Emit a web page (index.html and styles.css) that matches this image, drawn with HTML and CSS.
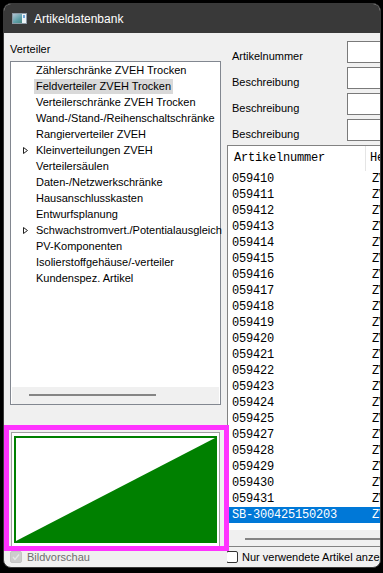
FILE: index.html
```html
<!DOCTYPE html>
<html lang="de">
<head>
  <meta charset="UTF-8">
  <title>Artikeldatenbank</title>
  <link rel="stylesheet" href="styles.css">
</head>
<body>

  <div class="window">
    <div class="titlebar">
      <svg class="app-icon" width="15" height="11" viewBox="0 0 15 11">
        <defs>
          <linearGradient id="ig" x1="0" y1="0" x2="1" y2="1">
            <stop offset="0" stop-color="#b9c8d6"/>
            <stop offset="0.5" stop-color="#5f9fa8"/>
            <stop offset="1" stop-color="#3b7d6b"/>
          </linearGradient>
        </defs>
        <rect x="0.5" y="0.5" width="14" height="10" fill="url(#ig)" stroke="#8d9aa6"/>
        <rect x="10" y="1" width="4" height="9" fill="#eef4f8"/>
        <rect x="11" y="2" width="2" height="3" fill="#6fa4d8"/>
      </svg>
      <span>Artikeldatenbank</span>
    </div>

    <div class="client">
      <div class="left">
        <div class="caption">Verteiler</div>
        <div class="tree">
          <ul class="tree-items">
            <li><span class="expander"></span><span class="node">Zählerschränke ZVEH Trocken</span></li>
            <li><span class="expander"></span><span class="node selected">Feldverteiler ZVEH Trocken</span></li>
            <li><span class="expander"></span><span class="node">Verteilerschränke ZVEH Trocken</span></li>
            <li><span class="expander"></span><span class="node">Wand-/Stand-/Reihenschaltschränke</span></li>
            <li><span class="expander"></span><span class="node">Rangierverteiler ZVEH</span></li>
            <li>
              <span class="expander">
                <svg width="5" height="7" viewBox="0 0 5 7"><polygon points="0.5,0.5 4.5,3.5 0.5,6.5" fill="none" stroke="#222"/></svg>
              </span>
              <span class="node">Kleinverteilungen ZVEH</span>
            </li>
            <li><span class="expander"></span><span class="node">Verteilersäulen</span></li>
            <li><span class="expander"></span><span class="node">Daten-/Netzwerkschränke</span></li>
            <li><span class="expander"></span><span class="node">Hausanschlusskasten</span></li>
            <li><span class="expander"></span><span class="node">Entwurfsplanung</span></li>
            <li>
              <span class="expander">
                <svg width="5" height="7" viewBox="0 0 5 7"><polygon points="0.5,0.5 4.5,3.5 0.5,6.5" fill="none" stroke="#222"/></svg>
              </span>
              <span class="node">Schwachstromvert./Potentialausgleich</span>
            </li>
            <li><span class="expander"></span><span class="node">PV-Komponenten</span></li>
            <li><span class="expander"></span><span class="node">Isolierstoffgehäuse/-verteiler</span></li>
            <li><span class="expander"></span><span class="node">Kundenspez. Artikel</span></li>
          </ul>
          <div class="hscroll"><div class="thumb"></div></div>
        </div>

        <div class="preview">
          <svg width="203" height="107" viewBox="0 0 203 107">
            <rect x="1" y="1" width="201" height="105" fill="#fff" stroke="#008000" stroke-width="2"/>
            <polygon points="2,105 201,105 201,2" fill="#008000"/>
          </svg>
        </div>

        <div class="check disabled">
          <span class="box">
            <svg width="10" height="10" viewBox="0 0 10 10"><polyline points="2,5 4,7.5 8,2.5" fill="none" stroke="#e6e6e6" stroke-width="1.3"/></svg>
          </span>
          Bildvorschau
        </div>
      </div>

      <div class="right">
        <div class="field"><label>Artikelnummer</label><div class="input"></div></div>
        <div class="field"><label>Beschreibung</label><div class="input"></div></div>
        <div class="field"><label>Beschreibung</label><div class="input"></div></div>
        <div class="field"><label>Beschreibung</label><div class="input"></div></div>

        <div class="grid">
          <div class="grid-head">
            <div class="col1">Artikelnummer</div>
            <div class="col2">Hersteller</div>
          </div>
          <div class="grid-rows" id="rows"></div>
          <div class="grid-spacer"></div>
          <div class="grid-scroll"><div class="thumb"></div></div>
        </div>

        <div class="check used">
          <span class="box"></span>
          Nur verwendete Artikel anzeigen
        </div>
      </div>

      <div class="marker"></div>
    </div>
  </div>

  <script>
    const rows = document.getElementById("rows");
    const numbers = [];
    for (let n = 59410; n <= 59431; n++) {
      if (n !== 59426) numbers.push("0" + n);
    }
    numbers.push("SB-300425150203");

    numbers.forEach((nr, i) => {
      const row = document.createElement("div");
      row.className = "row" + (i === numbers.length - 1 ? " selected" : "");
      row.innerHTML = `<div class="col1">${nr}</div><div class="col2">ZVEH</div>`;
      rows.appendChild(row);
    });
  </script>

</body>
</html>
```

FILE: styles.css
```css
* {
  box-sizing: border-box;
}
body {
  margin: 0;
  padding: 3px;
  background: #000;
  font-family: "Liberation Sans", Arial, sans-serif;
  font-size: 11px;
  color: #000;
  overflow: hidden;
}
.window {
  width: 378px;
  height: 565px;
  border: 1px solid #3a3a3a;
  border-radius: 8px;
  overflow: hidden;
  background: #f0f0f0;
  display: flex;
  flex-direction: column;
}
.titlebar {
  height: 29px;
  flex: none;
  background: #393939;
  color: #fff;
  display: flex;
  align-items: center;
  gap: 7px;
  padding-left: 8px;
  font-size: 12px;
}
.app-icon {
  display: block;
}

.client {
  flex: 1;
  position: relative;
  display: grid;
  grid-template-columns: 223px 153px;
}

/* left side: tree + preview */
.left {
  padding: 9px 0 0 6px;
}
.caption {
  line-height: 14px;
  margin-bottom: 5px;
}
.tree {
  width: 211px;
  height: 344px;
  border: 1px solid #828790;
  background: #fff;
  display: flex;
  flex-direction: column;
}
.tree-items {
  list-style: none;
  margin: 0;
  padding: 0;
  flex: 1;
}
.tree-items li {
  height: 16px;
  display: flex;
  align-items: center;
  padding-left: 11px;
  white-space: nowrap;
}
.expander {
  width: 12px;
  height: 16px;
  flex: none;
  display: flex;
  align-items: center;
  padding-left: 1px;
}
.expander svg {
  display: block;
}
.node {
  padding: 0 2px;
  line-height: 15px;
}
.node.selected {
  background: #d9d9d9;
}
.hscroll {
  height: 17px;
  margin: 0 1px;
  background: #f0f0f0;
  padding-top: 7px;
}
.hscroll .thumb {
  margin-left: 17px;
  width: 127px;
  height: 2px;
  background: #858585;
}

.preview {
  margin: 27px 0 0 1px;
  width: 209px;
  height: 115px;
  border: 1px solid #a0a0a0;
  background: #fff;
  padding: 3px 0 0 2px;
}
.preview svg {
  display: block;
}

.check {
  display: flex;
  align-items: center;
  gap: 5px;
  margin-top: 4px;
  height: 12px;
  line-height: 12px;
  white-space: nowrap;
}
.check .box {
  width: 12px;
  height: 12px;
  flex: none;
  border: 1px solid #333;
  border-radius: 2px;
  background: #fff;
}
.check .box svg {
  display: block;
}
.check.disabled {
  color: #6d6d6d;
}
.check.disabled .box {
  background: #cccccc;
  border-color: #c4c4c4;
}
.check.used {
  margin-left: -1px;
  gap: 4px;
}

/* right side: fields + grid */
.right {
  padding-top: 8px;
  overflow: hidden;
}
.field {
  display: flex;
  height: 22px;
  margin-bottom: 4px;
  padding-left: 5px;
}
.field label {
  width: 115px;
  flex: none;
  align-self: flex-end;
  line-height: 14px;
  white-space: nowrap;
}
.field .input {
  width: 60px;
  flex: none;
  border: 1px solid #7a7a7a;
  background: #fff;
}

.grid {
  width: 200px;
  height: 402px;
  border: 1px solid #828282;
  border-right: none;
  background: #fff;
  display: flex;
  flex-direction: column;
  font-family: "Liberation Mono", "Courier New", monospace;
  font-size: 12px;
  letter-spacing: -0.2px;
}
.grid-head {
  height: 25px;
  flex: none;
  display: flex;
  line-height: 25px;
  white-space: nowrap;
}
.grid-head .col1 {
  width: 138px;
  flex: none;
  padding-left: 6px;
  border-right: 1px solid #e5e5e5;
}
.grid-head .col2 {
  padding-left: 4px;
}
.row {
  height: 16px;
  line-height: 16px;
  display: flex;
  white-space: nowrap;
}
.row .col1 {
  width: 138px;
  flex: none;
  padding-left: 4px;
}
.row .col2 {
  padding-left: 6px;
}
.row.selected {
  background: #0078d7;
  color: #fff;
}
.grid-spacer {
  flex: 1;
}
.grid-scroll {
  height: 16px;
  flex: none;
  background: #f0f0f0;
  padding-top: 8px;
}
.grid-scroll .thumb {
  margin-left: 17px;
  width: 180px;
  height: 2px;
  background: #858585;
}

.marker {
  position: absolute;
  left: 0;
  top: 392px;
  width: 225px;
  height: 126px;
  border: 5px solid #ff33ff;
}
```
